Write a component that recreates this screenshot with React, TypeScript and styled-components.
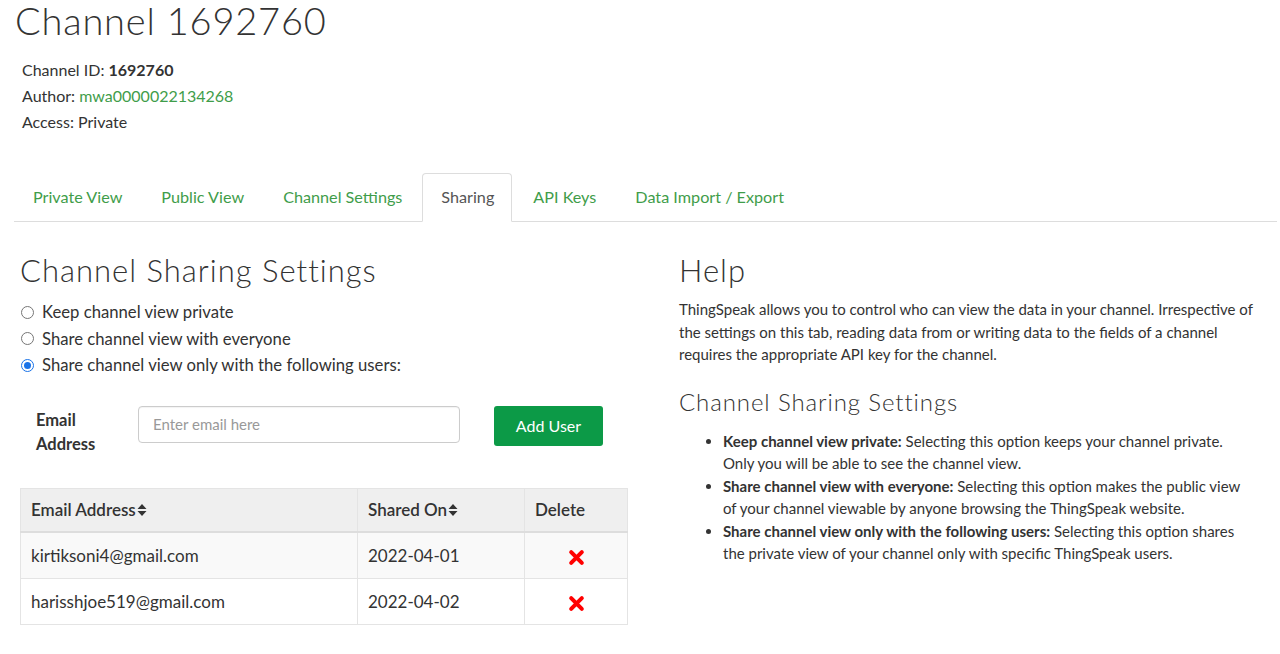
import React from "react";
import styled, { createGlobalStyle } from "styled-components";

const Global = createGlobalStyle`
  body {
    margin: 0;
    background: #fff;
    font-family: "Lato", "Open Sans", sans-serif;
    color: #333;
  }
  * { box-sizing: border-box; }
`;

const Page = styled.div`
  width: 1280px;
  height: 654px;
  overflow: hidden;
`;

const Title = styled.h1`
  margin: 0;
  padding: 0 0 0 15px;
  font-family: "Lato", sans-serif;
  font-weight: 300;
  font-size: 38px;
  letter-spacing: 0.8px;
  line-height: 40px;
  color: #333;
`;

const Meta = styled.div`
  padding: 17px 0 0 22px;
  font-size: 16px;
  line-height: 26px;
`;

const MetaLine = styled.div``;

const Strong = styled.b`
  font-weight: 700;
`;

const Link = styled.a`
  color: #3f9d4a;
  text-decoration: none;
`;

const Tabs = styled.ul`
  list-style: none;
  margin: 38px 3px 0 14px;
  padding: 0;
  display: flex;
  border-bottom: 1px solid #ddd;
  height: 49px;
`;

const Tab = styled.li<{ $active?: boolean }>`
  margin-right: 2px;
  margin-bottom: -1px;
  padding: 0 17px 2px 18px;
  height: 49px;
  display: flex;
  align-items: center;
  font-size: 16.2px;
  color: ${(p) => (p.$active ? "#555" : "#3f9d4a")};
  background: ${(p) => (p.$active ? "#fff" : "transparent")};
  border: 1px solid ${(p) => (p.$active ? "#ddd" : "transparent")};
  border-bottom-color: ${(p) => (p.$active ? "#fff" : "transparent")};
  border-radius: 4px 4px 0 0;
`;

const Columns = styled.div`
  display: grid;
  grid-template-columns: 608px 1fr;
  column-gap: 51px;
  padding: 28px 20px 0 20px;
`;

const Col = styled.div``;

const H2 = styled.h2`
  margin: 0;
  font-family: "Lato", sans-serif;
  font-weight: 300;
  font-size: 31px;
  letter-spacing: 1px;
  line-height: 40px;
  color: #333;
`;

const H3 = styled.h3`
  margin: 21px 0 0 0;
  font-family: "Lato", sans-serif;
  font-weight: 300;
  font-size: 24px;
  line-height: 30px;
  color: #333;
  letter-spacing: 0.9px;
`;

const RadioList = styled.div`
  margin-top: 9px;
  display: flex;
  flex-direction: column;
`;

const RadioRow = styled.label`
  display: flex;
  align-items: center;
  height: 26.5px;
  font-size: 16.7px;
  color: #333;
`;

const Radio = styled.span<{ $checked?: boolean }>`
  width: 13px;
  height: 13px;
  border-radius: 50%;
  margin: 0 8px 0 1px;
  border: 1px solid ${(p) => (p.$checked ? "#1a73e8" : "#767676")};
  display: flex;
  align-items: center;
  justify-content: center;
  &::after {
    content: "";
    width: 7px;
    height: 7px;
    border-radius: 50%;
    background: ${(p) => (p.$checked ? "#1a73e8" : "transparent")};
  }
`;

const FormRow = styled.div`
  display: flex;
  align-items: flex-start;
  margin-top: 27px;
  padding-left: 16px;
`;

const FieldLabel = styled.div`
  width: 102px;
  margin-top: 2px;
  font-weight: 700;
  font-size: 16.5px;
  line-height: 24px;
  color: #333;
`;

const Input = styled.div`
  width: 322px;
  height: 37px;
  border: 1px solid #ccc;
  border-radius: 4px;
  display: flex;
  align-items: center;
  padding-left: 14px;
  font-size: 15px;
  color: #999;
  box-shadow: inset 0 1px 1px rgba(0, 0, 0, 0.05);
`;

const Button = styled.div`
  margin-left: 34px;
  width: 109px;
  height: 40px;
  background: #0c9a47;
  border-radius: 3px;
  color: #fff;
  font-size: 16px;
  display: flex;
  align-items: center;
  justify-content: center;
`;

const Table = styled.table`
  margin-top: 32px;
  width: 608px;
  border-collapse: collapse;
  font-size: 17px;
`;

const Th = styled.th<{ $w?: number }>`
  background: #efefef;
  text-align: left;
  font-weight: 600;
  height: 44px;
  padding: 0 10px;
  border: 1px solid #e4e4e4;
  border-bottom: 2px solid #ddd;
  color: #333;
  width: ${(p) => (p.$w ? p.$w + "px" : "auto")};
  white-space: nowrap;
`;

const Tr = styled.tr<{ $striped?: boolean }>`
  background: ${(p) => (p.$striped ? "#f9f9f9" : "#fff")};
`;

const Td = styled.td<{ $center?: boolean }>`
  height: 46px;
  padding: 0 10px;
  border: 1px solid #e4e4e4;
  color: #333;
  text-align: ${(p) => (p.$center ? "center" : "left")};
  vertical-align: middle;
`;

const SortIcon = styled.svg`
  width: 10px;
  height: 14px;
  vertical-align: -1px;
  margin-left: 1px;
`;

const XIcon = styled.svg`
  width: 17px;
  height: 17px;
  vertical-align: middle;
  margin-top: 2px;
`;

const HelpText = styled.p`
  margin: 8px 0 0 0;
  font-size: 15px;
  line-height: 22.5px;
  color: #333;
`;

const Bullets = styled.ul`
  margin: 13px 0 0 0;
  padding-left: 44px;
  font-size: 15px;
  line-height: 22.5px;
  color: #333;
`;

const Bullet = styled.li`
  padding-right: 12px;
`;

const Sort = () => (
  <SortIcon viewBox="0 0 10 14">
    <path d="M5 1 L9.5 6 L0.5 6 Z M5 13 L9.5 8 L0.5 8 Z" fill="#333" />
  </SortIcon>
);

const Remove = () => (
  <XIcon viewBox="0 0 16 16">
    <path
      d="M3 3 L13 13 M13 3 L3 13"
      stroke="#f00"
      strokeWidth="3.8"
      strokeLinecap="round"
    />
  </XIcon>
);

export default function App() {
  return (
    <Page>
      <Global />
      <Title>Channel 1692760</Title>
      <Meta>
        <MetaLine>
          Channel ID: <Strong>1692760</Strong>
        </MetaLine>
        <MetaLine>
          Author: <Link>mwa0000022134268</Link>
        </MetaLine>
        <MetaLine>Access: Private</MetaLine>
      </Meta>
      <Tabs>
        <Tab>Private View</Tab>
        <Tab>Public View</Tab>
        <Tab>Channel Settings</Tab>
        <Tab $active>Sharing</Tab>
        <Tab>API Keys</Tab>
        <Tab>Data Import / Export</Tab>
      </Tabs>
      <Columns>
        <Col>
          <H2>Channel Sharing Settings</H2>
          <RadioList>
            <RadioRow>
              <Radio />
              Keep channel view private
            </RadioRow>
            <RadioRow>
              <Radio />
              Share channel view with everyone
            </RadioRow>
            <RadioRow>
              <Radio $checked />
              Share channel view only with the following users:
            </RadioRow>
          </RadioList>
          <FormRow>
            <FieldLabel>
              Email
              <br />
              Address
            </FieldLabel>
            <Input>Enter email here</Input>
            <Button>Add User</Button>
          </FormRow>
          <Table>
            <thead>
              <tr>
                <Th $w={337}>
                  Email Address
                  <Sort />
                </Th>
                <Th $w={167}>
                  Shared On
                  <Sort />
                </Th>
                <Th>Delete</Th>
              </tr>
            </thead>
            <tbody>
              <Tr $striped>
                <Td>kirtiksoni4@gmail.com</Td>
                <Td>2022-04-01</Td>
                <Td $center>
                  <Remove />
                </Td>
              </Tr>
              <Tr>
                <Td>harisshjoe519@gmail.com</Td>
                <Td>2022-04-02</Td>
                <Td $center>
                  <Remove />
                </Td>
              </Tr>
            </tbody>
          </Table>
        </Col>
        <Col>
          <H2>Help</H2>
          <HelpText>
            ThingSpeak allows you to control who can view the data in your
            channel. Irrespective of the settings on this tab, reading data
            from or writing data to the fields of a channel requires the
            appropriate API key for the channel.
          </HelpText>
          <H3>Channel Sharing Settings</H3>
          <Bullets>
            <Bullet>
              <Strong>Keep channel view private:</Strong> Selecting this
              option keeps your channel private. Only you will be able to see
              the channel view.
            </Bullet>
            <Bullet>
              <Strong>Share channel view with everyone:</Strong> Selecting
              this option makes the public view of your channel viewable by
              anyone browsing the ThingSpeak website.
            </Bullet>
            <Bullet>
              <Strong>Share channel view only with the following users:</Strong>{" "}
              Selecting this option shares the private view of your channel
              only with specific ThingSpeak users.
            </Bullet>
          </Bullets>
        </Col>
      </Columns>
    </Page>
  );
}
